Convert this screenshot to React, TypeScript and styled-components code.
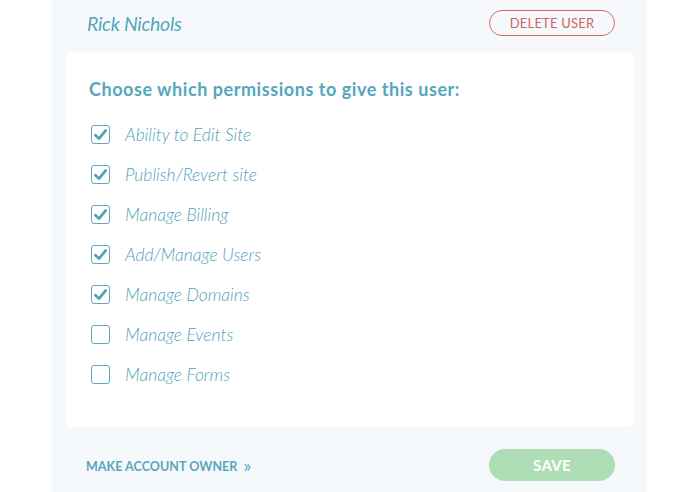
import React, { ReactElement } from 'react';
import styled, { createGlobalStyle } from 'styled-components';

const TEAL = '#56a6bc';

const GlobalStyle = createGlobalStyle`
  html, body {
    margin: 0;
    padding: 0;
    background: #ffffff;
    font-family: Lato, "Liberation Sans", sans-serif;
  }
`;

const Page = styled.div`
  display: flex;
  height: 492px;
  padding-left: 52px;
  box-sizing: border-box;
`;

const Panel = styled.div`
  background: #f6f9fc;
  box-sizing: border-box;
  display: flex;
  flex-direction: column;
  height: 100%;
  padding: 0 13px;
  width: 595px;
`;

const Header = styled.div`
  align-items: center;
  display: flex;
  height: 52px;
  justify-content: space-between;
  padding: 0 19px 6px 22px;
  box-sizing: border-box;
`;

const UserName = styled.h2`
  color: ${TEAL};
  font-family: Lato, sans-serif;
  font-size: 19.5px;
  font-style: italic;
  font-weight: 400;
  letter-spacing: -0.3px;
  margin: 0;
`;

const PillButton = styled.button<{ $variant: 'danger' | 'save' }>`
  align-items: center;
  border-radius: 16px;
  box-sizing: border-box;
  cursor: pointer;
  display: flex;
  font-family: Lato, sans-serif;
  justify-content: center;
  padding: 0;
  width: 126px;
  ${({ $variant }) =>
    $variant === 'danger'
      ? `
    background: transparent;
    border: 1px solid #d36a6a;
    color: #cc6464;
    font-size: 13px;
    font-weight: 400;
    height: 26px;
    letter-spacing: 0.2px;
  `
      : `
    background: #aedcb5;
    border: none;
    color: #ffffff;
    font-size: 15px;
    font-weight: 700;
    height: 32px;
    letter-spacing: 0.3px;
  `}
`;

const Card = styled.div`
  background: #ffffff;
  border-radius: 6px;
  box-sizing: border-box;
  height: 375px;
  padding: 26px 24px 0 24px;
`;

const Heading = styled.h3`
  color: ${TEAL};
  font-family: Lato, sans-serif;
  font-size: 18px;
  font-weight: 700;
  letter-spacing: 0.55px;
  margin: 0 0 25px 0;
`;

const List = styled.ul`
  display: flex;
  flex-direction: column;
  gap: 21px;
  list-style: none;
  margin: 0;
  padding: 0 0 0 2px;
`;

const Item = styled.li`
  align-items: center;
  display: flex;
  gap: 15px;
  height: 19px;
`;

const Box = styled.span`
  align-items: center;
  border: 1.5px solid #5ea9bd;
  border-radius: 3px;
  box-sizing: border-box;
  display: flex;
  height: 19px;
  justify-content: center;
  width: 19px;
`;

const Label = styled.span`
  color: #52a3ba;
  font-family: Lato, sans-serif;
  font-size: 17.5px;
  font-style: italic;
  font-weight: 300;
  letter-spacing: 0;
`;

const Footer = styled.div`
  align-items: center;
  display: flex;
  justify-content: space-between;
  padding: 22px 19px 0 21px;
`;

const OwnerLink = styled.a`
  align-items: center;
  color: ${TEAL};
  display: flex;
  font-family: Lato, sans-serif;
  font-size: 12.5px;
  font-weight: 700;
  gap: 6px;
  letter-spacing: 0.05px;
  margin-top: 2px;
  text-transform: uppercase;
`;

const Chevrons = styled.span`
  font-size: 18px;
  font-weight: 400;
  margin-top: -3px;
`;

interface Permission {
  label: string;
  checked: boolean;
}

const PERMISSIONS: Permission[] = [
  { label: 'Ability to Edit Site', checked: true },
  { label: 'Publish/Revert site', checked: true },
  { label: 'Manage Billing', checked: true },
  { label: 'Add/Manage Users', checked: true },
  { label: 'Manage Domains', checked: true },
  { label: 'Manage Events', checked: false },
  { label: 'Manage Forms', checked: false },
];

function Check(): ReactElement {
  return (
    <svg width="13" height="12" viewBox="0 0 13 12">
      <path
        d="M1.5 6.2 L5 9.6 L11.8 1.4"
        fill="none"
        stroke="#4f9fb5"
        strokeWidth="2.6"
        strokeLinecap="round"
        strokeLinejoin="round"
      />
    </svg>
  );
}

export default function App(): ReactElement {
  return (
    <>
      <GlobalStyle />
      <Page>
        <Panel>
          <Header>
            <UserName>Rick Nichols</UserName>
            <PillButton $variant="danger">DELETE USER</PillButton>
          </Header>
          <Card>
            <Heading>Choose which permissions to give this user:</Heading>
            <List>
              {PERMISSIONS.map(
                (permission: Permission): ReactElement => (
                  <Item key={permission.label}>
                    <Box>{permission.checked && <Check />}</Box>
                    <Label>{permission.label}</Label>
                  </Item>
                ),
              )}
            </List>
          </Card>
          <Footer>
            <OwnerLink>
              Make account owner <Chevrons>»</Chevrons>
            </OwnerLink>
            <PillButton $variant="save">SAVE</PillButton>
          </Footer>
        </Panel>
      </Page>
    </>
  );
}
